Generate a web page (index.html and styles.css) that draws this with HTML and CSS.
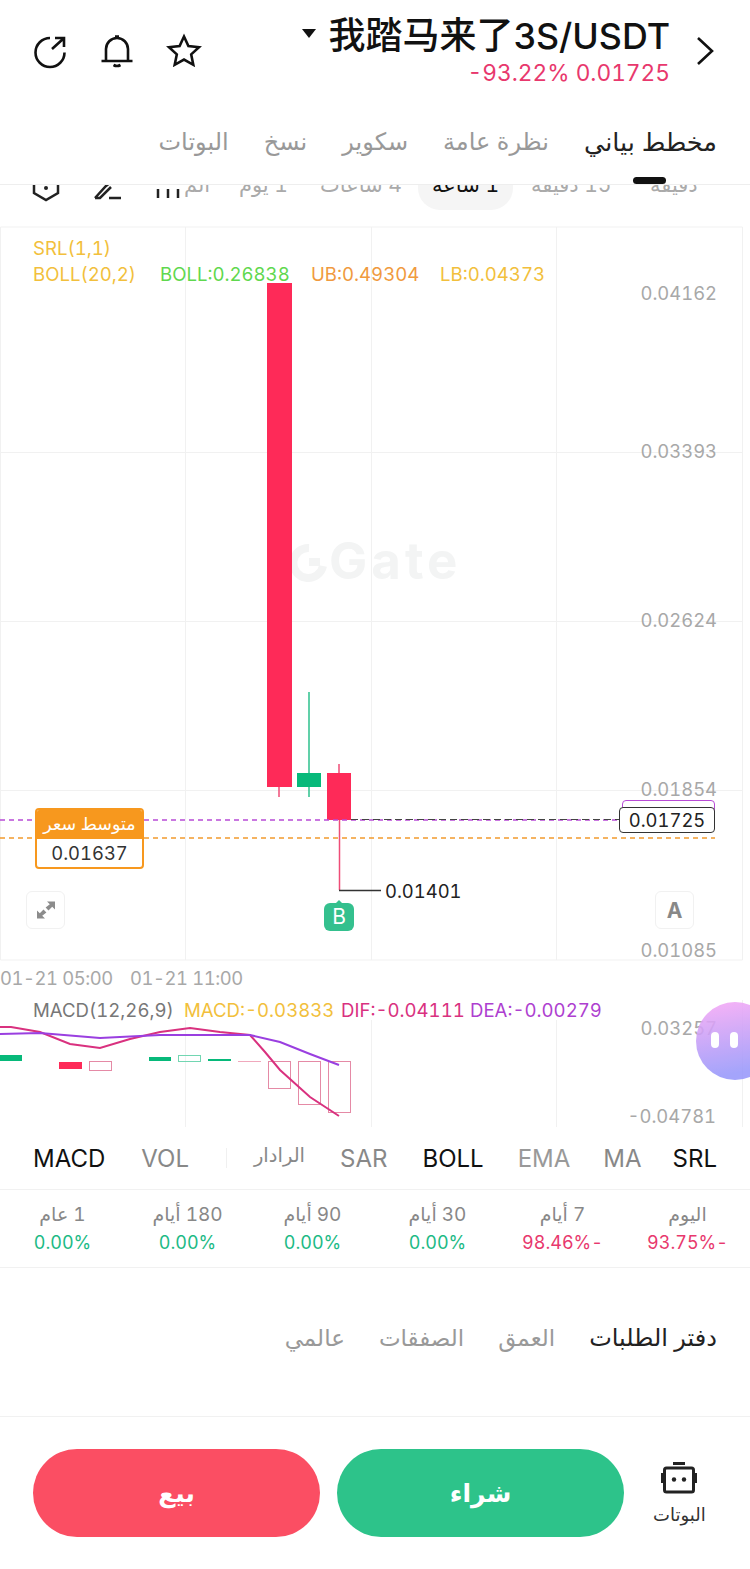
FILE: index.html
```html
<!DOCTYPE html>
<html lang="ar">
<head>
  <meta charset="UTF-8" />
  <meta name="viewport" content="width=device-width, initial-scale=1.0"/>
  <title>3S/USDT</title>
  <link rel="stylesheet" href="styles.css">
</head>
<body>

<header class="top">
  <div class="top-icons">
    <svg class="ic" viewBox="0 0 36 36"><path d="M18 5A14.500 14.500 0 1 0 32.500 19.500"/><path d="M20 16 31 6M23 5H32V14"/></svg>
    <svg class="ic" viewBox="0 0 36 36"><path d="M2.500 28H33.500M7 28V16a11 11 0 0 1 22 0v12M16 3.500h4M14.500 32q3.500 2 7 0"/></svg>
    <svg class="ic" viewBox="0 0 36 36"><path d="M18 3.500 22.400 13 33 14.300 25.200 21.400 27.300 31.800 18 26.600 8.700 31.800 10.800 21.400 3 14.300 13.600 13Z"/></svg>
  </div>
  <div class="pair">
    <div class="pair-name"><span class="caret"></span><span><span class="cjk">我踏马来了</span>3S/USDT</span></div>
    <div class="pair-price">-93.22% 0.01725</div>
  </div>
  <svg class="chevron" viewBox="0 0 20 30"><path d="M3 2 17 15 3 28"/></svg>
</header>

<nav class="tabs" dir="rtl">
  <a class="tab active">مخطط بياني</a>
  <a class="tab">نظرة عامة</a>
  <a class="tab">سكوير</a>
  <a class="tab">نسخ</a>
  <a class="tab">البوتات</a>
</nav>

<div class="timeframes">
  <svg class="tf-ic" viewBox="0 0 30 30"><path d="M3 8V20L15 27 27 20V8"/><circle class="tf-dot" cx="15" cy="15" r="2"/></svg>
  <svg class="tf-ic" viewBox="0 0 30 30"><path d="M3 25 14 13 20 8M3 25H8L19 14M17 25H29"/></svg>
  <svg class="tf-ic" viewBox="0 0 30 30"><path d="M5 16V25M15 16V25M25 16V25"/></svg>
  <span class="tf tf-more" dir="rtl">الم</span>
  <span class="tf tf-day" dir="rtl">1 يوم</span>
  <span class="tf tf-4h" dir="rtl">4 ساعات</span>
  <span class="tf tf-pill" dir="rtl">1 ساعة</span>
  <span class="tf tf-15" dir="rtl">15 دقيقة</span>
  <span class="tf tf-5" dir="rtl">دقيقة</span>
</div>

<section class="chart">
  <svg class="plot" viewBox="0 227 750 900">
    <g class="grid">
      <path d="M0.500 227H742.500V960H0.500ZM185.500 227V960M371.500 227V960M556.500 227V960M0 452.500H742M0 621.500H742M0 790.500H742"/>
      <path d="M185.500 1020V1127M371.500 1020V1127M556.500 1020V1127M742.500 1000V1127"/>
    </g>

    <g class="mark">
      <path class="mark-ring" d="M309 548A15 15 0 1 0 323 566"/>
      <path class="mark-ring" d="M309 562H320"/>
      <text x="329" y="579">Gate</text>
    </g>

    <text class="leg srl" x="33" y="255">SRL(1,1)</text>
    <text class="leg srl" x="33" y="281">BOLL(20,2)</text>
    <text class="leg boll" x="160" y="281">BOLL:0.26838</text>
    <text class="leg ub" x="311" y="281">UB:0.49304</text>
    <text class="leg srl" x="440" y="281">LB:0.04373</text>

    <text class="axis" x="717" y="300">0.04162</text>
    <text class="axis" x="717" y="458">0.03393</text>
    <text class="axis" x="717" y="627">0.02624</text>
    <text class="axis" x="717" y="796">0.01854</text>
    <text class="axis" x="717" y="957">0.01085</text>
    <text class="axis-x" x="0" y="985">01-21 05:00</text>
    <text class="axis-x" x="130" y="985">01-21 11:00</text>

    <path class="wick-red" d="M279 787V797M339 764V773M339.500 820V890"/>
    <path class="wick-green" d="M309 692V797"/>
    <rect class="up" x="267" y="283" width="25" height="504"/>
    <rect class="down" x="297" y="773" width="24" height="14"/>
    <rect class="up" x="327" y="773" width="24" height="47"/>

    <path class="line-low" d="M339 890.500H381"/>
    <text class="low" x="385" y="898">0.01401</text>

    <path class="dash-purple" d="M0 820H620"/>
    <path class="dash-dark" d="M351 819.500H620"/>
    <path class="dash-orange" d="M0 838H715"/>

    <text class="leg macd-t" x="33" y="1017">MACD(12,26,9)</text>
    <text class="leg srl" x="184" y="1017">MACD:-0.03833</text>
    <text class="leg dif" x="341" y="1017">DIF:-0.04111</text>
    <text class="leg dea" x="470" y="1017">DEA:-0.00279</text>
    <text class="axis" x="717" y="1035">0.03257</text>
    <text class="axis" x="716" y="1123">-0.04781</text>

    <rect class="down" x="0" y="1055" width="22" height="6"/>
    <rect class="up" x="59" y="1062" width="23" height="7"/>
    <rect class="bar-red" x="89.500" y="1061.500" width="22" height="9"/>
    <rect class="down" x="149" y="1057" width="22" height="4"/>
    <rect class="bar-green" x="178.500" y="1055.500" width="22" height="6"/>
    <rect class="down" x="208" y="1059" width="23" height="2"/>
    <rect class="bar-thin" x="238" y="1061" width="23" height="1"/>
    <rect class="bar-red" x="268.500" y="1061.500" width="22" height="27"/>
    <rect class="bar-red" x="298.500" y="1061.500" width="22" height="43"/>
    <rect class="bar-red" x="328.500" y="1061.500" width="22" height="51"/>

    <polyline class="line-dif" points="0,1027 11,1027 40,1032 70,1044 100,1048 130,1039 160,1032 190,1028 220,1032 250,1035 265,1052 280,1070 310,1097 339,1116"/>
    <polyline class="line-dea" points="0,1034 40,1033 100,1038 160,1035 250,1035 280,1042 310,1054 339,1065"/>
  </svg>

  <div class="avg-box">
    <div class="avg-head">متوسط سعر</div>
    <div class="avg-val">0.01637</div>
  </div>

  <div class="last-tab"></div>
  <div class="last-box">0.01725</div>

  <div class="chart-btn btn-expand">
    <svg viewBox="0 0 20 20"><path d="M11 1.500H19V9.500L16.200 6.700 12.500 10.400 9.600 7.500 13.800 4.300ZM9 18.500H1V10.500L3.800 13.300 7.500 9.600 10.400 12.500 6.200 15.700Z"/></svg>
  </div>
  <div class="chart-btn btn-auto">A</div>

  <div class="b-mark">B</div>

  <div class="bot-float"><i></i><i></i></div>
</section>

<div class="indicators">
  <span class="ind on">MACD</span>
  <span class="ind ind-vol">VOL</span>
  <span class="ind-sep"></span>
  <span class="ind ind-ar">الرادار</span>
  <span class="ind">SAR</span>
  <span class="ind on">BOLL</span>
  <span class="ind faint ind-ema">EMA</span>
  <span class="ind ind-ma">MA</span>
  <span class="ind on ind-srl">SRL</span>
</div>

<div class="stats" dir="rtl">
  <div class="stat"><div class="stat-k">اليوم</div><div class="stat-v neg">-93.75%</div></div>
  <div class="stat"><div class="stat-k">7 أيام</div><div class="stat-v neg">-98.46%</div></div>
  <div class="stat"><div class="stat-k">30 أيام</div><div class="stat-v pos">0.00%</div></div>
  <div class="stat"><div class="stat-k">90 أيام</div><div class="stat-v pos">0.00%</div></div>
  <div class="stat"><div class="stat-k">180 أيام</div><div class="stat-v pos">0.00%</div></div>
  <div class="stat"><div class="stat-k">1 عام</div><div class="stat-v pos">0.00%</div></div>
</div>

<div class="book" dir="rtl">
  <a class="book-tab active">دفتر الطلبات</a>
  <a class="book-tab">العمق</a>
  <a class="book-tab">الصفقات</a>
  <a class="book-tab">عالمي</a>
</div>

<footer class="actions">
  <button class="btn btn-sell">بيع</button>
  <button class="btn btn-buy">شراء</button>
  <div class="bots">
    <svg viewBox="0 0 36 32"><path class="bot-solid" d="M12 0H24V3H12ZM0 11H2V21H0ZM34 11H36V21H34Z"/><rect class="bot-body" x="3.500" y="6" width="29" height="24" rx="2"/><circle class="bot-eye" cx="13" cy="17.500" r="2.200"/><circle class="bot-eye" cx="23" cy="17.500" r="2.200"/></svg>
    <span>البوتات</span>
  </div>
</footer>

</body>
</html>
```

FILE: styles.css
```css
body {
  margin: 0;
  background: #fff;
  font-family: Inter, "Liberation Sans", "DejaVu Sans", "Noto Sans CJK SC", sans-serif;
  font-variant-numeric: tabular-nums;
  color: #111;
  width: 750px;
  height: 1569px;
  overflow: hidden;
}

/* top bar */
.top {
  height: 100px;
  display: flex;
  align-items: flex-start;
  background: #fff;
  position: relative;
  z-index: 2;
}
.top-icons {
  display: flex;
  gap: 31px;
  padding: 33px 0 0 32px;
}
.ic {
  width: 36px;
  height: 36px;
  fill: none;
  stroke: #111;
  stroke-width: 2.600;
}
.pair {
  margin-left: auto;
  padding-top: 15px;
  text-align: right;
}
.pair-name {
  font-size: 35.800px;
  font-variant-numeric: normal;
  line-height: 42px;
  font-weight: 500;
  display: flex;
  align-items: center;
  justify-content: flex-end;
}
.cjk { font-size: 37px; }
.caret {
  border-top: 9px solid #111;
  border-left: 7px solid transparent;
  border-right: 7px solid transparent;
  margin: 0 12px 6px 0;
}
.pair-price {
  font-size: 22.700px;
  line-height: 26px;
  color: #e8386d;
  margin-top: 3px;
}
.chevron {
  width: 20px;
  height: 30px;
  margin: 36px 35px 0 25px;
  fill: none;
  stroke: #111;
  stroke-width: 2.600;
}

/* tabs */
.tabs {
  height: 84px;
  display: flex;
  gap: 35px;
  padding: 0 33px;
  align-items: flex-start;
  background: #fff;
  border-bottom: 1px solid #eeeeee;
  position: relative;
  z-index: 2;
}
.tab {
  font-size: 24px;
  line-height: 84px;
  height: 84px;
  color: #999;
  position: relative;
}
.tab.active {
  font-size: 25.500px;
  color: #222;
}
.tab.active::after {
  content: "";
  position: absolute;
  right: 51px;
  bottom: 0;
  width: 33px;
  height: 7px;
  border-radius: 4px;
  background: #111;
}

/* timeframes, top half sits under the tabs */
.timeframes {
  height: 64px;
  margin-top: -22px;
  position: relative;
  display: flex;
  align-items: center;
  padding-left: 31px;
  overflow: hidden;
}
.tf-ic {
  width: 30px;
  height: 30px;
  margin-right: 31px;
  margin-top: -14px;
  fill: none;
  stroke: #222;
  stroke-width: 2.500;
}
.tf-dot {
  fill: #222;
  stroke: none;
}
.tf {
  position: absolute;
  top: 9px;
  font-size: 21px;
  line-height: 26px;
  color: #aaa;
  white-space: nowrap;
}
.tf-more { left: 184px; }
.tf-day { left: 239px; }
.tf-4h { left: 320px; }
.tf-pill {
  left: 418px;
  top: -4px;
  width: 95px;
  height: 51px;
  line-height: 52px;
  background: #f5f5f5;
  border-radius: 22px;
  color: #111;
  text-align: center;
}
.tf-15 { left: 531px; }
.tf-5 { left: 650px; }

/* chart area */
.chart {
  position: relative;
  height: 900px;
}
.plot {
  display: block;
  width: 750px;
  height: 900px;
  overflow: visible;
}
.grid path {
  fill: none;
  stroke: #f1f1f1;
  stroke-width: 1;
}
.mark text {
  font-size: 51px;
  font-weight: 700;
  letter-spacing: 4px;
  fill: #f3f4f4;
}
.mark-ring {
  fill: none;
  stroke: #f3f4f4;
  stroke-width: 8;
}
.leg { font-size: 18.600px; }
.srl { fill: #f2bf3c; }
.boll { fill: #5fd84e; }
.ub { fill: #f09a3e; }
.macd-t { fill: #777; }
.dif { fill: #d9317f; }
.dea { fill: #ae3fd0; }
.axis {
  font-size: 18.400px;
  fill: #a8a8a8;
  text-anchor: end;
}
.axis-x {
  font-size: 18.400px;
  letter-spacing: -0.400px;
  fill: #a8a8a8;
}
.up { fill: #fe2a58; }
.down { fill: #07b97a; }
.wick-red {
  fill: none;
  stroke: #ef4d77;
  stroke-width: 1.500;
}
.wick-green {
  fill: none;
  stroke: #2cc08c;
  stroke-width: 1.500;
}
.line-low {
  fill: none;
  stroke: #333;
  stroke-width: 1.500;
}
.low {
  font-size: 18.400px;
  fill: #222;
}
.dash-purple, .dash-dark, .dash-orange {
  fill: none;
  stroke-width: 1.500;
}
.dash-purple {
  stroke: #b84bd6;
  stroke-dasharray: 5 4;
}
.dash-dark {
  stroke: #444;
  stroke-dasharray: 7 4;
  stroke-width: 1;
}
.dash-orange {
  stroke: #f29a2e;
  stroke-dasharray: 5 4;
}
.bar-red {
  fill: none;
  stroke: #e58aa6;
  stroke-width: 1;
}
.bar-green {
  fill: none;
  stroke: #72d6b2;
  stroke-width: 1;
}
.bar-thin { fill: #f0a8bc; }
.line-dif, .line-dea {
  fill: none;
  stroke-width: 2;
}
.line-dif { stroke: #d9317f; }
.line-dea { stroke: #9a3fe0; }

/* things sitting on the chart */
.avg-box {
  position: absolute;
  left: 35px;
  top: 581px;
  width: 109px;
  border-radius: 4px;
  overflow: hidden;
  background: #fff;
  border: 2px solid #f7981e;
  box-sizing: border-box;
}
.avg-head {
  height: 29px;
  line-height: 28px;
  background: #f7981e;
  color: #fff;
  font-size: 17.500px;
  text-align: center;
}
.avg-val {
  height: 28px;
  line-height: 29px;
  font-size: 18.400px;
  color: #333;
  text-align: center;
}
.last-tab {
  position: absolute;
  left: 622px;
  top: 573px;
  width: 93px;
  height: 20px;
  box-sizing: border-box;
  border: 1.500px solid #b84bd6;
  border-radius: 4px;
}
.last-box {
  position: absolute;
  left: 619px;
  top: 580px;
  width: 96px;
  height: 26px;
  box-sizing: border-box;
  border: 1.500px solid #333;
  border-radius: 4px;
  background: #fff;
  font-size: 18.400px;
  line-height: 24px;
  text-align: center;
  color: #222;
}
.chart-btn {
  position: absolute;
  top: 664px;
  width: 39px;
  height: 38px;
  box-sizing: border-box;
  border: 1.500px solid #f1f1f1;
  border-radius: 6px;
  background: #fff;
  display: flex;
  align-items: center;
  justify-content: center;
  color: #888;
}
.btn-expand { left: 26px; }
.btn-expand svg {
  width: 20px;
  height: 20px;
  fill: #8c8c8c;
}
.btn-auto {
  left: 655px;
  font-size: 21px;
  font-weight: 700;
}
.b-mark {
  position: absolute;
  left: 324px;
  top: 676px;
  width: 30px;
  height: 28px;
  border-radius: 6px;
  background: #34c08e;
  color: #fff;
  font-size: 21px;
  line-height: 28px;
  text-align: center;
}
.b-mark::before {
  content: "";
  position: absolute;
  left: 11px;
  top: -3px;
  border-bottom: 4px solid #34c08e;
  border-left: 4px solid transparent;
  border-right: 4px solid transparent;
}
.bot-float {
  position: absolute;
  left: 696px;
  top: 775px;
  width: 78px;
  height: 78px;
  border-radius: 50%;
  background: linear-gradient(170deg, #f8a8f5, #9898fb 85%);
  opacity: 0.88;
  display: flex;
  gap: 11px;
  padding: 30px 0 0 15px;
  box-sizing: border-box;
}
.bot-float i {
  width: 8px;
  height: 16px;
  border-radius: 4px;
  background: #fff;
}

/* indicator row */
.indicators {
  height: 62px;
  display: flex;
  align-items: center;
  gap: 35px;
  padding-left: 33px;
  border-bottom: 1px solid #f1f1f1;
}
.ind {
  font-size: 24px;
  color: #888;
}
.ind.on { color: #111; }
.ind.faint { color: #999; }
.ind-vol { margin-left: 1px; }
.ind-ar {
  font-size: 19.500px;
  margin: -6px 0 0 -8px;
}
.ind-ema { margin-left: -1px; }
.ind-ma { margin-left: -2px; }
.ind-srl { margin-left: -4px; }
.ind-sep {
  width: 1px;
  height: 20px;
  margin-left: 2px;
  background: #f0f0f0;
}

/* stats */
.stats {
  height: 77px;
  display: grid;
  grid-template-columns: repeat(6, 125px);
  border-bottom: 1px solid #f1f1f1;
}
.stat {
  text-align: center;
  padding-top: 12px;
}
.stat-k {
  font-size: 19px;
  line-height: 26px;
  color: #888;
}
.stat-v {
  font-size: 18px;
  line-height: 30px;
}
.neg { color: #e8386d; }
.pos { color: #1dba85; }

/* order book tabs */
.book {
  height: 148px;
  display: flex;
  gap: 34px;
  padding: 0 33px;
  border-bottom: 1px solid #f1f1f1;
}
.book-tab {
  font-size: 23px;
  line-height: 140px;
  color: #999;
}
.book-tab.active {
  font-size: 24px;
  color: #222;
}

/* bottom buttons */
.actions {
  display: flex;
  padding: 32px 0 0 33px;
  gap: 17px;
}
.btn {
  width: 287px;
  height: 88px;
  border: none;
  border-radius: 44px;
  color: #fff;
  font-family: inherit;
  font-size: 25px;
  font-weight: 700;
}
.btn-sell { background: #fb4e63; }
.btn-buy { background: #2dc38a; }
.bots {
  margin-left: 12px;
  display: flex;
  flex-direction: column;
  align-items: center;
  font-size: 18px;
  color: #333;
  gap: 10px;
  padding-top: 13px;
}
.bots svg {
  width: 36px;
  height: 32px;
}
.bot-solid { fill: #222; }
.bot-body {
  fill: none;
  stroke: #222;
  stroke-width: 3;
}
.bot-eye { fill: #222; }
```
